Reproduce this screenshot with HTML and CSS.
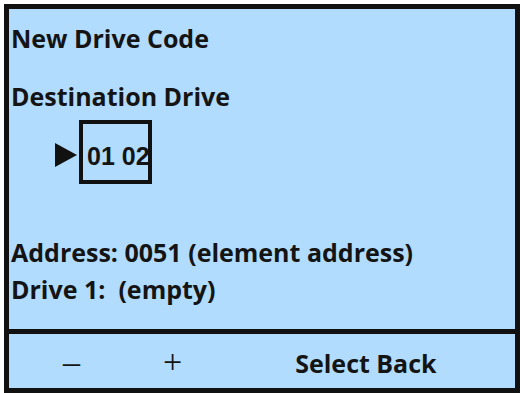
FILE: index.html
```html
<!DOCTYPE html>
<html>
<head>
<meta charset="utf-8">
<link rel="stylesheet" href="styles.css">
</head>
<body>
<div class="screen">
  <div class="main">
    <div class="row title">New Drive Code</div>
    <div class="row dest">Destination Drive</div>
    <div class="selector">
      <svg class="arrow" width="22" height="24" viewBox="0 0 22 24"><polygon points="0,0 22,12 0,24" fill="#111"/></svg>
      <div class="box"><span class="codes">01 02</span></div>
    </div>
    <div class="row address">Address: 0051 (element address)</div>
    <div class="row drive">Drive 1:&nbsp; (empty)</div>
  </div>
  <div class="footer">
    <span class="key minus">–</span>
    <span class="key plus">+</span>
    <span class="soft">Select Back</span>
  </div>
</div>
</body>
</html>
```

FILE: styles.css
```css
html, body {
  margin: 0;
  padding: 0;
  background: #ffffff;
}
.screen {
  margin: 4px 0 0 4px;
  width: 516px;
  height: 389px;
  box-sizing: border-box;
  border: 5px solid #111111;
  background: #b2dcfd;
  display: flex;
  flex-direction: column;
  font-family: "Open Sans", "DejaVu Sans", sans-serif;
  color: #141414;
}
.main {
  height: 325px;
  box-sizing: border-box;
  border-bottom: 5px solid #111111;
  padding: 12px 0 0 2px;
  display: flex;
  flex-direction: column;
}
.row {
  font-size: 25px;
  font-weight: 700;
  line-height: 34px;
  height: 34px;
  white-space: nowrap;
}
.dest {
  margin-top: 24px;
}
.selector {
  margin-top: 7px;
  margin-left: 44px;
  display: flex;
  align-items: flex-start;
  gap: 2px;
}
.arrow {
  margin-top: 23px;
  display: block;
}
.box {
  width: 73px;
  height: 64px;
  box-sizing: border-box;
  border: 4px solid #111111;
  padding: 18px 0 0 4px;
  overflow: visible;
}
.codes {
  font-family: "Liberation Sans", Arial, sans-serif;
  font-size: 25px;
  font-weight: 700;
  white-space: nowrap;
  display: block;
}
.address {
  margin-top: 51px;
}
.drive {
  margin-top: 3px;
}
.footer {
  flex: 1;
  display: flex;
  align-items: baseline;
  padding-top: 11px;
  box-sizing: border-box;
}
.key {
  font-family: "Liberation Serif", serif;
  font-weight: 400;
  font-size: 34px;
  line-height: 34px;
}
.minus {
  margin-left: 54px;
}
.plus {
  margin-left: 83px;
}
.soft {
  margin-left: 113px;
  font-weight: 700;
  font-size: 25px;
  line-height: 34px;
}
```
